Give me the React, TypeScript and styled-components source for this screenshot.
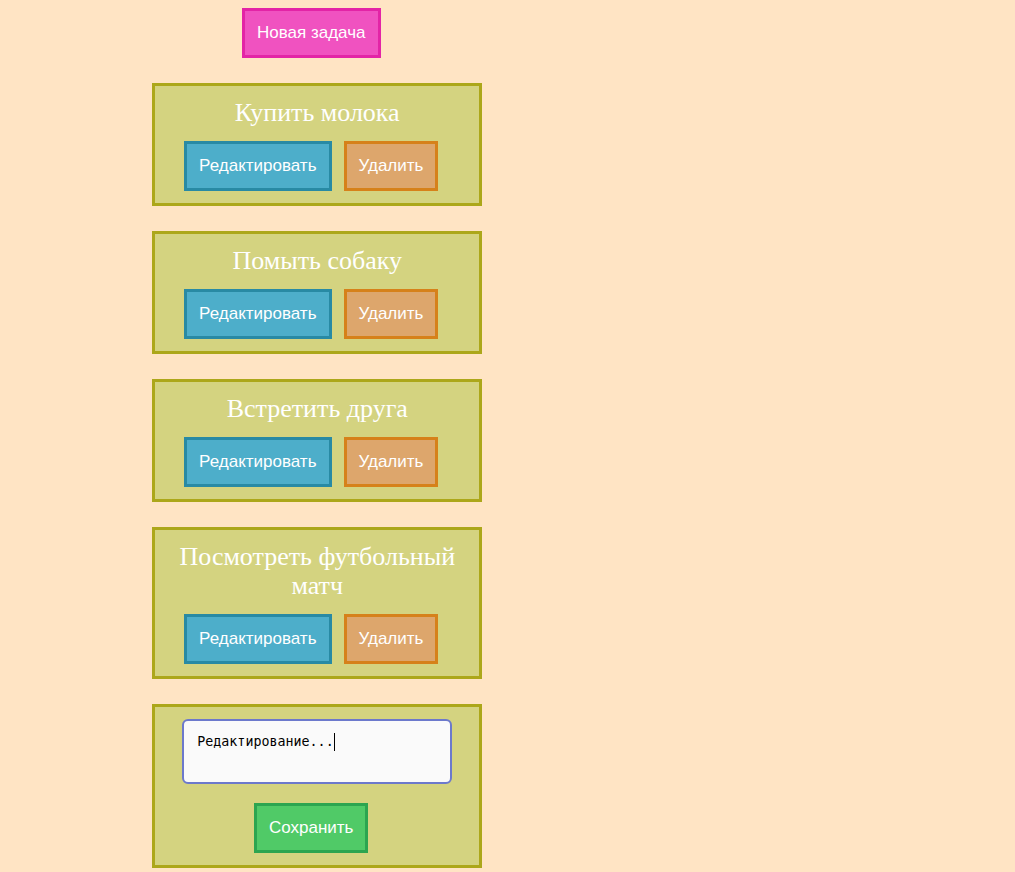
import { useEffect, useRef, useState } from 'react';
import styled, { createGlobalStyle } from 'styled-components';

const GlobalStyle = createGlobalStyle`
  *, *::before, *::after {
    box-sizing: border-box;
  }
  body {
    margin: 0;
    background: #ffe4c4;
  }
`;

const tones = {
  create: { fill: '#f052c0', edge: '#e324a6' },
  edit: { fill: '#4daeca', edge: '#288aa4' },
  remove: { fill: '#dda66c', edge: '#d6811a' },
  save: { fill: '#50ca67', edge: '#2ca550' },
};

const Page = styled.main`
  padding: 8px 15% 4px;
`;

const Board = styled.div`
  display: flex;
  flex-direction: column;
  gap: 25px;
  width: 100%;
  max-width: 330px;
`;

const Actions = styled.div`
  display: flex;
  justify-content: center;
`;

const Button = styled.button<{ $tone: keyof typeof tones }>`
  height: 50px;
  margin: 0 12px 0 0;
  padding: 0 12px;
  border: 3px solid ${({ $tone }) => tones[$tone].edge};
  background: ${({ $tone }) => tones[$tone].fill};
  color: #fff;
  font-family: 'Liberation Sans', Arial, sans-serif;
  font-size: 17px;
  cursor: pointer;
`;

const List = styled.ul`
  display: flex;
  flex-direction: column;
  gap: 25px;
  margin: 0;
  padding: 0;
  list-style: none;
`;

const Card = styled.li`
  padding: 12px;
  border: 3px solid #aca71a;
  background: #d4d380;
`;

const Title = styled.div`
  margin-bottom: 14px;
  color: #fff;
  font-family: 'Liberation Serif', 'Times New Roman', serif;
  font-size: 26px;
  line-height: 29px;
  text-align: center;
`;

const Field = styled.div`
  position: relative;
  width: 270px;
  max-width: 100%;
  margin: 0 auto 19px;
`;

const Editor = styled.textarea`
  display: block;
  width: 100%;
  height: 65px;
  padding: 13px;
  border: 2px solid #6c79cc;
  border-radius: 6px;
  outline: none;
  background: #fafafa;
  color: #000;
  caret-color: transparent;
  font-family: 'DejaVu Sans Mono', monospace;
  line-height: 16px;
  resize: none;
`;

const Caret = styled.span`
  position: absolute;
  top: 14px;
  left: 16px;
  width: 1px;
  height: 18px;
  background: #000;
  pointer-events: none;
`;

const CHAR_WIDTH = 8;
const LINE_HEIGHT = 16;

const tasks = ['Купить молока', 'Помыть собаку', 'Встретить друга', 'Посмотреть футбольный матч'];

function TaskCard({ title }: { title: string }) {
  return (
    <Card>
      <Title>{title}</Title>
      <Actions>
        <Button type="button" $tone="edit">Редактировать</Button>
        <Button type="button" $tone="remove">Удалить</Button>
      </Actions>
    </Card>
  );
}

function EditCard() {
  const [text, setText] = useState('Редактирование...');
  const [cursor, setCursor] = useState(text.length);
  const field = useRef<HTMLTextAreaElement>(null);

  useEffect(() => {
    const el = field.current;
    if (el) {
      el.focus({ preventScroll: true });
      el.setSelectionRange(el.value.length, el.value.length);
    }
  }, []);

  const lines = text.slice(0, cursor).split('\n');
  const column = lines[lines.length - 1].length;
  const x = column * CHAR_WIDTH;
  const y = (lines.length - 1) * LINE_HEIGHT;

  return (
    <Card>
      <Field>
        <Editor
          ref={field}
          aria-label="Редактирование"
          spellCheck={false}
          value={text}
          onChange={(e) => {
            setText(e.target.value);
            setCursor(e.target.selectionStart);
          }}
          onSelect={(e) => setCursor(e.currentTarget.selectionStart)}
        />
        <Caret style={{ transform: `translate(${x}px, ${y}px)` }} />
      </Field>
      <Actions>
        <Button type="button" $tone="save">Сохранить</Button>
      </Actions>
    </Card>
  );
}

export default function App() {
  return (
    <Page>
      <GlobalStyle />
      <Board>
        <Actions>
          <Button type="button" $tone="create">Новая задача</Button>
        </Actions>
        <List>
          {tasks.map((title) => (
            <TaskCard key={title} title={title} />
          ))}
          <EditCard />
        </List>
      </Board>
    </Page>
  );
}
